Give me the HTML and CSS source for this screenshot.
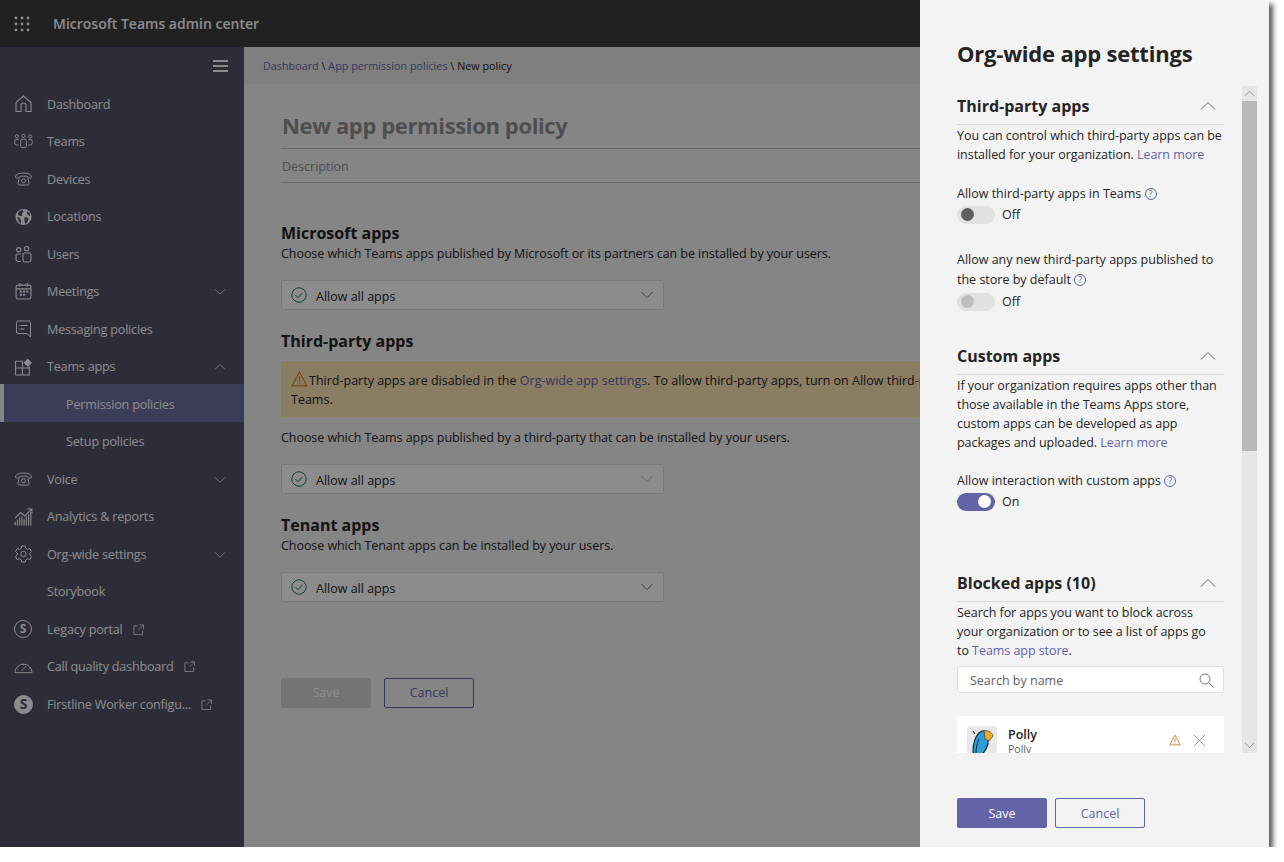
FILE: index.html
```html
<!DOCTYPE html>
<html>
<head>
<meta charset="utf-8" />
<title>Microsoft Teams admin center</title>
<link rel="stylesheet" href="styles.css">
</head>
<body>
<svg class="defs" width="0" height="0">
	<symbol id="i-chev-down" viewBox="0 0 16 16"><path d="M1.5 4.5L8 11l6.5-6.5" fill="none" stroke="currentColor" stroke-width="1"/></symbol>
	<symbol id="i-chev-up" viewBox="0 0 16 16"><path d="M1 11.5L8 4.5l7 7" fill="none" stroke="currentColor" stroke-width="1"/></symbol>
	<symbol id="i-home" viewBox="0 0 18 18"><path d="M1.5 16.5V7.5L9 1l7.5 6.5v9h-5v-6a2.5 2.5 0 0 0-5 0v6z" fill="none" stroke="currentColor" stroke-width="1.1"/></symbol>
	<symbol id="i-teams" viewBox="0 0 20 16"><g fill="none" stroke="currentColor" stroke-width="1"><circle cx="2.8" cy="2.5" r="1.7"/><circle cx="10" cy="2" r="1.7"/><circle cx="17.2" cy="2.5" r="1.7"/><rect x="7" y="5.5" width="6" height="9" rx="1.5"/><path d="M4.8 6H2a1.3 1.3 0 0 0-1.3 1.3v2.4A2 2 0 0 0 2.700 11.700h2M15.200 6H18a1.300 1.300 0 0 1 1.300 1.300v2.400a2 2 0 0 1-2 2h-2"/></g></symbol>
	<symbol id="i-phone" viewBox="0 0 18 14"><g fill="none" stroke="currentColor" stroke-width="1"><path d="M1 5C1 2.500 4.500 1 9 1s8 1.500 8 4c0 1-.800 1-2 1s-2-.2-2-1.500C11 4 7 4 5 4.500 5 5.800 4.200 6 3 6S1 6 1 5z"/><path d="M4.500 6.500L3.500 11.500a1.500 1.500 0 0 0 1.500 1.500h8a1.500 1.500 0 0 0 1.500-1.500l-1-5"/><circle cx="9" cy="8.800" r="2"/></g></symbol>
	<symbol id="i-globe" viewBox="0 0 18 18"><circle cx="9" cy="9" r="8" fill="currentColor"/><path d="M5 3l3-1 1 2-2 2 1 2-3 0-2-2zM10 9l4 1-1 4-2 2-1-3zM12 3l3 2 1 3-3-1zM2.500 9l3 1 1 3 0 3-2-2z" fill="#52526a"/></symbol>
	<symbol id="i-users" viewBox="0 0 16 16"><g fill="none" stroke="currentColor" stroke-width="1"><circle cx="3.500" cy="3.500" r="2"/><circle cx="11" cy="2.500" r="2"/><rect x="7.500" y="6.500" width="7.500" height="8.500" rx="1.800"/><path d="M5.500 7.500H2.500A1.500 1.500 0 0 0 1 9v3.500A2 2 0 0 0 3 14.500h2.500"/></g></symbol>
	<symbol id="i-calendar" viewBox="0 0 16 16"><g fill="none" stroke="currentColor" stroke-width="1"><rect x="1" y="2" width="14" height="13" rx="1.500"/><path d="M4.500 0v3.500M11.500 0v3.500M1 5.500h14"/></g><path d="M4.500 7h2v2h-2zM7.500 7h2v2h-2zM10.500 7h2v2h-2zM4.500 10h2v2h-2zM7.500 10h2v2h-2z" fill="currentColor"/></symbol>
	<symbol id="i-message" viewBox="0 0 16 18"><path d="M1 2.500A1.500 1.500 0 0 1 2.500 1h11A1.500 1.500 0 0 1 15 2.500V17l-3.500-3.500h-9A1.500 1.500 0 0 1 1 12z" fill="none" stroke="currentColor" stroke-width="1"/><path d="M4 5.500h8M4 9h5" stroke="currentColor" stroke-width="1"/></symbol>
	<symbol id="i-apps" viewBox="0 0 17 17"><path d="M1 3h6.500v13H1zM1 9.500h13M7.500 16H14V8" fill="none" stroke="currentColor" stroke-width="1"/><path d="M12.500 0.500l4 4-4 4-4-4z" fill="currentColor"/></symbol>
	<symbol id="i-chart" viewBox="0 0 17 16"><path d="M1 15.500v-3M3 15.500v-5M5 15.500v-7M7 15.500v-8M9 15.500v-6M11 15.500v-8M13 15.500v-10M15 15.500v-12" stroke="currentColor" stroke-width="1"/><path d="M1 9l5-5 3.500 3L16 1M12 .800h4v4" fill="none" stroke="currentColor" stroke-width="1"/></symbol>
	<symbol id="i-gear" viewBox="0 0 18 18"><g fill="none" stroke="currentColor" stroke-width="1"><circle cx="9" cy="9" r="2.700"/><path d="M7.200 1h3.600l.5 2.300 1.700 1 2.300-.8 1.700 3-1.700 1.600v1.900l1.700 1.600-1.700 3-2.300-.8-1.700 1-.5 2.200H7.200l-.5-2.200-1.700-1-2.300.8-1.700-3 1.700-1.600V8.100L1 6.500l1.700-3 2.300.8 1.700-1z"/></g></symbol>
	<symbol id="i-gauge" viewBox="0 0 20 14"><path d="M1 13a9 9 0 0 1 18 0z" fill="none" stroke="currentColor" stroke-width="1"/><path d="M8 11l5-5M3.500 9l1 .6M15.500 9l1-.6M10 4v1.200" fill="none" stroke="currentColor" stroke-width="1"/></symbol>
	<symbol id="i-external" viewBox="0 0 12 12"><path d="M5 2H1v9.500h9.500V7M7 1h4.500v4.500M11.500 1L6 6.500" fill="none" stroke="currentColor" stroke-width="1"/></symbol>
	<symbol id="i-check" viewBox="0 0 16 16"><circle cx="8" cy="8" r="7.200" fill="none" stroke="currentColor" stroke-width="1"/><path d="M4.500 8.200l2.500 2.500 4.500-5" fill="none" stroke="currentColor" stroke-width="1"/></symbol>
	<symbol id="i-warn" viewBox="0 0 16 15"><path d="M8 1L1 14h14z" fill="none" stroke="currentColor" stroke-width="1.100"/><path d="M8 5v5M8 11v1.500" stroke="currentColor" stroke-width="1.100"/></symbol>
	<symbol id="i-search" viewBox="0 0 15 15"><circle cx="6" cy="6" r="5" fill="none" stroke="currentColor" stroke-width="1"/><path d="M9.700 9.700l5 5" stroke="currentColor" stroke-width="1"/></symbol>
	<symbol id="i-close" viewBox="0 0 13 13"><path d="M1 1l11 11M12 1L1 12" stroke="currentColor" stroke-width="1"/></symbol>
</svg>

<div class="window">
	<header class="topbar">
		<svg class="waffle" width="16" height="16" viewBox="0 0 16 16"><g fill="currentColor"><circle cx="2" cy="2" r="1.400"/><circle cx="8" cy="2" r="1.400"/><circle cx="14" cy="2" r="1.400"/><circle cx="2" cy="8" r="1.400"/><circle cx="8" cy="8" r="1.400"/><circle cx="14" cy="8" r="1.400"/><circle cx="2" cy="14" r="1.400"/><circle cx="8" cy="14" r="1.400"/><circle cx="14" cy="14" r="1.400"/></g></svg>
		<span class="topbar-title">Microsoft Teams admin center</span>
	</header>
	<div class="layout">
		<nav class="sidebar">
			<div class="burger"><span></span><span></span><span></span></div>
			<ul class="nav">
				<li><svg class="ico ico-home"><use href="#i-home"/></svg><span>Dashboard</span></li>
				<li><svg class="ico ico-teams"><use href="#i-teams"/></svg><span>Teams</span></li>
				<li><svg class="ico ico-phone"><use href="#i-phone"/></svg><span>Devices</span></li>
				<li><svg class="ico ico-home"><use href="#i-globe"/></svg><span>Locations</span></li>
				<li><svg class="ico ico-users"><use href="#i-users"/></svg><span>Users</span></li>
				<li><svg class="ico ico-users"><use href="#i-calendar"/></svg><span>Meetings</span><svg class="nav-chev"><use href="#i-chev-down"/></svg></li>
				<li><svg class="ico ico-home"><use href="#i-message"/></svg><span>Messaging policies</span></li>
				<li><svg class="ico ico-home"><use href="#i-apps"/></svg><span>Teams apps</span><svg class="nav-chev"><use href="#i-chev-up"/></svg></li>
				<li class="sub on"><span>Permission policies</span></li>
				<li class="sub"><span>Setup policies</span></li>
				<li><svg class="ico ico-phone"><use href="#i-phone"/></svg><span>Voice</span><svg class="nav-chev"><use href="#i-chev-down"/></svg></li>
				<li><svg class="ico ico-home"><use href="#i-chart"/></svg><span>Analytics &amp; reports</span></li>
				<li><svg class="ico ico-home"><use href="#i-gear"/></svg><span>Org-wide settings</span><svg class="nav-chev"><use href="#i-chev-down"/></svg></li>
				<li><span class="ico"></span><span>Storybook</span></li>
				<li><span class="ico skype">S</span><span>Legacy portal</span><svg class="ext"><use href="#i-external"/></svg></li>
				<li><svg class="ico ico-gauge"><use href="#i-gauge"/></svg><span>Call quality dashboard</span><svg class="ext"><use href="#i-external"/></svg></li>
				<li><span class="ico skype solid">S</span><span>Firstline Worker configu...</span><svg class="ext"><use href="#i-external"/></svg></li>
			</ul>
		</nav>
		<main class="main">
			<div class="crumbs"><a href="#">Dashboard</a> \ <a href="#">App permission policies</a> \ New policy</div>
			<div class="form">
				<h1 class="policy-name">New app permission policy</h1>
				<div class="policy-desc">Description</div>

				<h2 class="form-head">Microsoft apps</h2>
				<p class="form-text">Choose which Teams apps published by Microsoft or its partners can be installed by your users.</p>
				<div class="select"><svg class="check"><use href="#i-check"/></svg><span>Allow all apps</span><svg class="select-chev"><use href="#i-chev-down"/></svg></div>

				<h2 class="form-head head-third">Third-party apps</h2>
				<div class="notice"><svg class="notice-ico"><use href="#i-warn"/></svg>Third-party apps are disabled in the <a href="#">Org-wide app settings</a>. To allow third-party apps, turn on Allow third-party apps in<br>Teams.</div>
				<p class="form-text text-third">Choose which Teams apps published by a third-party that can be installed by your users.</p>
				<div class="select"><svg class="check"><use href="#i-check"/></svg><span>Allow all apps</span><svg class="select-chev faint"><use href="#i-chev-down"/></svg></div>

				<h2 class="form-head head-tenant">Tenant apps</h2>
				<p class="form-text">Choose which Tenant apps can be installed by your users.</p>
				<div class="select"><svg class="check"><use href="#i-check"/></svg><span>Allow all apps</span><svg class="select-chev"><use href="#i-chev-down"/></svg></div>

				<div class="buttons form-buttons">
					<button class="btn btn-off">Save</button>
					<button class="btn btn-line">Cancel</button>
				</div>
			</div>
		</main>
	</div>
	<div class="scrim"></div>

	<aside class="panel">
		<h2 class="panel-title">Org-wide app settings</h2>
		<div class="panel-body">
			<div class="panel-scroll">
				<section class="group">
					<div class="group-head"><h3>Third-party apps</h3><svg class="group-chev"><use href="#i-chev-up"/></svg></div>
					<p class="group-text">You can control which third-party apps can be<br>installed for your organization. <a href="#">Learn more</a></p>
					<div class="setting"><div class="setting-label">Allow third-party apps in Teams <span class="help">?</span></div>
						<div class="toggle-row"><span class="toggle"><i></i></span>Off</div></div>
					<div class="setting setting-2"><div class="setting-label">Allow any new third-party apps published to the store by default <span class="help">?</span></div>
						<div class="toggle-row"><span class="toggle disabled"><i></i></span>Off</div></div>
				</section>
				<section class="group group-custom">
					<div class="group-head"><h3>Custom apps</h3><svg class="group-chev"><use href="#i-chev-up"/></svg></div>
					<p class="group-text">If your organization requires apps other than those available in the Teams Apps store, custom apps can be developed as app packages and uploaded. <a href="#">Learn more</a></p>
					<div class="setting"><div class="setting-label">Allow interaction with custom apps <span class="help">?</span></div>
						<div class="toggle-row"><span class="toggle active"><i></i></span>On</div></div>
				</section>
				<section class="group group-blocked">
					<div class="group-head"><h3>Blocked apps (10)</h3><svg class="group-chev"><use href="#i-chev-up"/></svg></div>
					<p class="group-text">Search for apps you want to block across<br>your organization or to see a list of apps go<br>to <a href="#">Teams app store</a>.</p>
					<div class="search"><span>Search by name</span><svg class="search-ico"><use href="#i-search"/></svg></div>
					<div class="app-card">
						<div class="app-thumb"><svg width="24" height="34" viewBox="0 0 24 34"><path d="M5 28L3 24c0-8 2-15 6-19 3-3 7-3 9 0l0 11c-2 7-6 11-9 11z" fill="#2a9fd8" stroke="#1b2733" stroke-width="1.200"/><path d="M14 3c4-1 8 1 9 5l-4 5-4-2z" fill="#f7a823" stroke="#1b2733" stroke-width=".6"/><path d="M9 11c-2 4-3 9-3 14" fill="none" stroke="#1b2733" stroke-width="1"/><path d="M10 27l0 7M14 25l2 9" stroke="#1b2733" stroke-width="1.200"/><path d="M3 3l2 3" stroke="#1b2733" stroke-width="1"/></svg></div>
						<div class="app-info"><strong>Polly</strong><span>Polly</span></div>
						<svg class="app-warn"><use href="#i-warn"/></svg>
						<svg class="app-close"><use href="#i-close"/></svg>
					</div>
				</section>
			</div>
			<div class="scrollbar">
				<div class="scroll-btn"><svg><use href="#i-chev-up"/></svg></div>
				<div class="scroll-track"><div class="scroll-thumb"></div></div>
				<div class="scroll-btn"><svg><use href="#i-chev-down"/></svg></div>
			</div>
		</div>
		<div class="buttons panel-buttons">
			<button class="btn btn-main">Save</button>
			<button class="btn btn-line">Cancel</button>
		</div>
	</aside>
</div>
</body>
</html>
```

FILE: styles.css
```css
*{ margin:0; padding:0; box-sizing:border-box; list-style:none; text-decoration:none;}
html,body{ background:#fff;}
body{ font-family:"Open Sans","Noto Sans",sans-serif; font-size:13px; color:#252423;}
a{ color:#6264a7;}
.defs{ position:absolute;}

.window{ width:1269px; height:847px; position:relative; overflow:visible; display:flex; flex-direction:column; background:#f3f3f3; box-shadow:4px 4px 5px rgba(0,0,0,.65);}
.topbar{ height:47px; flex:none; background:#3c3c3c; color:#fff; display:flex; align-items:center; padding-left:14px;}
.waffle{ margin-right:23px; flex:none;}
.topbar-title{ font-size:14px; font-weight:600;}

.layout{ flex:1; display:flex; min-height:0;}
.sidebar{ width:244px; flex:none; background:#52526a; color:#fff;}
.burger{ height:38px; display:flex; flex-direction:column; justify-content:center; align-items:flex-end; gap:3px; padding-right:16px;}
.burger span{ width:15px; height:2px; background:#fff;}
.nav{ padding-top:.5px;}
.nav li{ height:37.5px; display:flex; align-items:center; padding-left:14px; position:relative; font-size:12.600px; letter-spacing:-.2px;}
.ico{ width:19px; margin-right:14px; flex:none; display:block; color:#fff;}
.ico-home{ height:18px;}
.ico-teams{ height:15px;}
.ico-phone{ height:14px;}
.ico-users{ height:17px;}
.ico-gauge{ height:14px;}
.skype{ height:18px; width:18px; margin-right:15px; border:1.500px solid #fff; border-radius:50%; font-size:12px; font-weight:700; line-height:15px; text-align:center;}
.skype.solid{ width:19px; height:19px; margin-right:14px; background:#fff; color:#52526a; font-size:14px; line-height:16px;}
.nav-chev{ position:absolute; right:16px; top:13px; width:16px; height:12px; color:#fff;}
.ext{ width:11px; height:11px; margin-left:10px; color:#fff; opacity:.85;}
.nav .sub{ padding-left:66px;}
.nav .on{ background:#6c6d9f; border-left:4px solid #f3f3f3; padding-left:62px; margin:-1.500px 0 1.500px; padding-top:3px;}

.main{ flex:1; min-width:0; display:flex; flex-direction:column;}
.crumbs{ height:37px; flex:none; background:#e8e8e8; padding-left:19px; font-size:10.800px; line-height:38px;}
.form{ padding:27px 0 0 37px;}
.policy-name{ font-size:22px; font-weight:700; line-height:28px; color:#8f8f8f; letter-spacing:-.37px; padding-left:1px; padding-bottom:9px; border-bottom:1px solid #bdbdbd;}
.policy-desc{ height:34px; line-height:36px; font-size:12.500px; color:#8f8f8f; padding-left:1px; border-bottom:1px solid #bdbdbd;}
.form-head{ font-size:16px; font-weight:700; line-height:20px; margin-top:40px;}
.form-text{ font-size:12.500px; line-height:20px; letter-spacing:-.06px; margin-top:1px;}
.select{ width:383px; height:30px; margin-top:16px; background:#fff; border:1px solid #dcdcdc; border-radius:2px; display:flex; align-items:center; padding:0 9px 0 10px; font-size:12.500px;}
.check{ width:16px; height:16px; color:#237b4b; margin-right:8px; margin-left:-1px; flex:none;}
.select span{ flex:1; padding-top:2px; padding-left:1px;}
.select-chev{ width:14px; height:14px; color:#555;}
.select-chev.faint{ color:#a8a8a8;}
.head-third{ margin-top:21px;}
.notice{ margin-top:10px; height:56px; background:#fbe3b5; padding:10px 0 0 10px; font-size:12.500px; line-height:19px; white-space:nowrap; width:720px;}
.notice-ico{ width:17px; height:16px; color:#d9822b; vertical-align:-2px; margin-right:1px;}
.text-third{ margin-top:11px;}
.head-tenant{ margin-top:21px;}
.buttons{ display:flex;}
.btn{ width:90px; height:30px; border-radius:2px; font-family:inherit; font-size:12.500px; border:1px solid transparent; text-align:center;}
.btn-off{ background:#d3d3d3; color:#fff;}
.btn-line{ background:transparent; border-color:#6264a7; color:#6264a7;}
.form-buttons{ margin-top:75.500px; gap:13px;}

.scrim{ position:absolute; left:0; top:0; right:0; bottom:0; background:rgba(0,0,0,.45);}

.panel{ position:absolute; top:0; right:0; bottom:0; width:349px; background:#f3f3f3; display:flex; flex-direction:column; padding:0 12px 0 37px;}
.panel-title{ font-size:22px; font-weight:700; line-height:30px; letter-spacing:-.2px; margin-top:38px; margin-bottom:1px; flex:none; color:#252423;}
.panel-body{ height:667px; margin-top:17px; flex:none; display:flex; justify-content:space-between;}
.panel-scroll{ width:267px; overflow:hidden;}
.group-head{ height:39px; padding-top:1px; display:flex; align-items:center; justify-content:space-between; padding-right:8px; border-bottom:1px solid #dcdcdc;}
.group-head h3{ font-size:16px; font-weight:700; color:#252423;}
.group-chev{ width:16px; height:16px; color:#666;}
.group-text{ font-size:12.500px; line-height:18.700px; margin-top:2px; letter-spacing:-.05px;}
.setting{ margin-top:20px; font-size:12.500px;}
.setting-2{ margin-top:25px;}
.setting-2 .toggle-row{ margin-top:1px;}
.setting-label{ line-height:20px;}
.help{ display:inline-block; width:12px; height:12px; border:1px solid #6264a7; border-radius:50%; color:#6264a7; font-size:9px; line-height:10px; text-align:center; vertical-align:1px; margin-left:0; letter-spacing:0;}
.toggle-row{ display:flex; align-items:center; gap:7px; height:21px;}
.toggle{ width:38px; height:18px; border-radius:9px; background:#e1e1e1; display:flex; align-items:center; padding:0 4px; flex:none;}
.toggle i{ width:13px; height:13px; border-radius:50%; background:#5e5e5e;}
.toggle.disabled i{ background:#bdbdbd;}
.toggle.active{ background:#6264a7; justify-content:flex-end;}
.toggle.active i{ background:#fff;}
.group-custom{ margin-top:24px;}
.group-custom .setting{ margin-top:19px;}
.group-blocked{ margin-top:51px;}
.search{ height:27px; margin-top:6px; background:#fff; border:1px solid #dedede; border-radius:3px; display:flex; align-items:center; justify-content:space-between; padding:1px 9px 0 12px; font-size:12.500px; color:#616161;}
.search-ico{ width:15px; height:15px; color:#777;}
.app-card{ height:62px; margin-top:23px; background:#fff; display:flex; padding:10px 0 0 10px; position:relative;}
.app-thumb{ width:30px; height:42px; background:#e8e8e8; border-radius:3px; display:flex; justify-content:center; padding-top:2px; flex:none; margin-right:11px;}
.app-info{ display:flex; flex-direction:column; font-size:12.500px; line-height:15px; padding-top:1px;}
.app-info strong{ font-weight:600;}
.app-info span{ font-size:10.500px; color:#616161;}
.app-warn{ position:absolute; left:212px; top:18px; width:12px; height:12px; color:#c4791f;}
.app-close{ position:absolute; left:236px; top:18px; width:13px; height:13px; color:#999;}

.scrollbar{ width:15px; flex:none; display:flex; flex-direction:column; background:#e5e5e5; margin-right:0;}
.scroll-btn{ height:15px; flex:none; color:#777; display:flex; align-items:center; justify-content:center;}
.scroll-btn svg{ width:11px; height:11px;}
.scroll-track{ flex:1;}
.scroll-thumb{ height:350px; background:#b9b9b9;}

.panel-buttons{ margin-top:45px; gap:8px;}
.btn-main{ background:#6264a7; color:#fff;}
```
